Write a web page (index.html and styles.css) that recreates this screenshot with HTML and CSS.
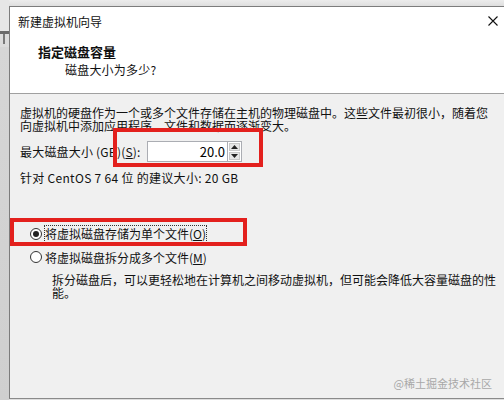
FILE: index.html
```html
<!DOCTYPE html>
<html lang="zh-CN">
<head>
    <meta charset="UTF-8">
    <title>新建虚拟机向导</title>
    <link rel="stylesheet" href="styles.css">
</head>
<body>
    <div class="screen">
        <!-- window behind the wizard -->
        <div class="side">
            <div class="side-top"></div>
            <div class="side-t"><span class="side-t-stem"></span></div>
            <div class="side-rest"></div>
        </div>

        <div class="wizard">
            <div class="head">
                <div class="titlebar">
                    <span class="title">新建虚拟机向导</span>
                    <svg class="close" width="10" height="10" viewBox="0 0 10 10">
                        <path d="M0.5 0.5 L9.5 9.5 M9.5 0.5 L0.5 9.5" stroke="#111" stroke-width="1.1" fill="none"/>
                    </svg>
                </div>
                <div class="step-title">指定磁盘容量</div>
                <div class="step-sub">磁盘大小为多少?</div>
            </div>

            <div class="main">
                <p class="intro">虚拟机的硬盘作为一个或多个文件存储在主机的物理磁盘中。这些文件最初很小，随着您<br>向虚拟机中添加应用程序、文件和数据而逐渐变大。</p>

                <div class="size-row">
                    <label>最大磁盘大小 (GB)(<u>S</u>):</label>
                    <div class="spin">
                        <input type="text" value="20.0">
                        <div class="spin-btns">
                            <span class="spin-btn"><svg width="7" height="4" viewBox="0 0 7 4"><polygon points="3.5,0 7,4 0,4" fill="#222"/></svg></span>
                            <span class="spin-btn"><svg width="7" height="4" viewBox="0 0 7 4"><polygon points="0,0 7,0 3.5,4" fill="#222"/></svg></span>
                        </div>
                    </div>
                </div>

                <div class="hint">针对 CentOS 7 64 位 的建议大小: 20 GB</div>

                <div class="radio-row">
                    <span class="radio checked"></span>
                    <span class="focus">将虚拟磁盘存储为单个文件(<u>O</u>)</span>
                </div>
                <div class="radio-row second">
                    <span class="radio"></span>
                    <span class="label">将虚拟磁盘拆分成多个文件(<u>M</u>)</span>
                </div>
                <p class="desc">拆分磁盘后，可以更轻松地在计算机之间移动虚拟机，但可能会降低大容量磁盘的性<br>能。</p>

                <div class="mark">@稀土掘金技术社区</div>

                <!-- red annotation boxes -->
                <div class="callout callout-size"></div>
                <div class="callout callout-single"></div>
            </div>
        </div>
    </div>
</body>
</html>
```

FILE: styles.css
```css
* {
    box-sizing: border-box;
}
body {
    margin: 0;
    background: linear-gradient(#ececec, #dedede 6px);
    font-family: "Noto Sans CJK SC", "Liberation Sans", sans-serif;
    font-size: 12px;
    color: #111;
}
.screen {
    display: flex;
    height: 400px;
    width: 504px;
    overflow: hidden;
}
.side {
    width: 9px;
    display: flex;
    flex-direction: column;
}
.side-top {
    height: 31px;
    background: #e6e6e6;
}
.side-t {
    height: 16px;
    background: #dcdcdc;
    border-top: 3px solid #6a6a6a;
    display: flex;
    padding-left: 3px;
}
.side-t-stem {
    width: 2px;
    height: 10px;
    background: #7a7a7a;
}
.side-rest {
    flex: 1;
    background: linear-gradient(#d6d6d6, #cfcfcf);
}
.wizard {
    flex: 1;
    margin-top: 6px;
    height: 393px;
    display: flex;
    flex-direction: column;
    border-top: 1px solid #7c7c7c;
    border-left: 1px solid #7c7c7c;
    border-bottom: 1px solid #8a8a8a;
    background: #f0f0f0;
}
.head {
    height: 87px;
    background: #fff;
    border-bottom: 1px solid #a0a0a0;
}
.titlebar {
    display: flex;
    justify-content: space-between;
    align-items: center;
    height: 16px;
    margin-top: 7px;
    padding-left: 8px;
    padding-right: 6px;
}
.title {
    line-height: 16px;
}
.close {
    margin-top: -2px;
}
.step-title {
    margin-top: 14px;
    padding-left: 28px;
    font-weight: bold;
    font-size: 13px;
    line-height: 16px;
}
.step-sub {
    margin-top: 2px;
    padding-left: 55px;
    line-height: 16px;
    letter-spacing: 0.2px;
}
.main {
    flex: 1;
    position: relative;
    display: flex;
    flex-direction: column;
    padding: 12px 0 0 10px;
}
.intro {
    margin: 0;
    line-height: 13px;
    white-space: nowrap;
}
.size-row {
    display: flex;
    align-items: center;
    height: 21px;
    margin-top: 9px;
}
.size-row label {
    width: 127px;
    letter-spacing: 0.2px;
}
.spin {
    display: flex;
    height: 21px;
}
.spin input {
    width: 80px;
    height: 21px;
    border: 1px solid #abadb3;
    border-right: none;
    background: #fff;
    text-align: right;
    font-family: "Noto Sans CJK SC", "Liberation Sans", sans-serif;
    font-size: 13px;
    padding: 0 2px 0 0;
    color: #000;
}
.spin-btns {
    width: 15px;
    display: flex;
    flex-direction: column;
    gap: 1px;
    border: 1px solid #abadb3;
    background: #fff;
    padding: 1px;
}
.spin-btn {
    flex: 1;
    display: flex;
    align-items: center;
    justify-content: center;
    background: #e6e6e6;
    border: 1px solid #c9c9c9;
}
.hint {
    margin-top: 9px;
    line-height: 14px;
    letter-spacing: 0.3px;
}
.radio-row {
    display: flex;
    align-items: center;
    height: 18px;
    margin-top: 40px;
    padding-left: 10px;
}
.radio-row.second {
    margin-top: 5px;
}
.radio {
    width: 12px;
    height: 12px;
    border: 1px solid #333;
    border-radius: 50%;
    background: #fff;
    margin-right: 3px;
    display: flex;
    align-items: center;
    justify-content: center;
}
.radio.checked::after {
    content: "";
    width: 6px;
    height: 6px;
    border-radius: 50%;
    background: #222;
}
.focus {
    outline: 1px dotted #333;
    line-height: 16px;
}
.desc {
    margin: 7px 0 0 32px;
    line-height: 13px;
    white-space: nowrap;
}
.mark {
    margin-top: auto;
    align-self: flex-end;
    padding: 0 12px 8px 0;
    font-size: 11px;
    line-height: 14px;
    color: #a8a8a8;
}
.callout {
    position: absolute;
    border: 4px solid #e3201d;
}
.callout-size {
    left: 103px;
    top: 34px;
    width: 150px;
    height: 39px;
}
.callout-single {
    left: 0;
    top: 124px;
    width: 237px;
    height: 28px;
}
```
